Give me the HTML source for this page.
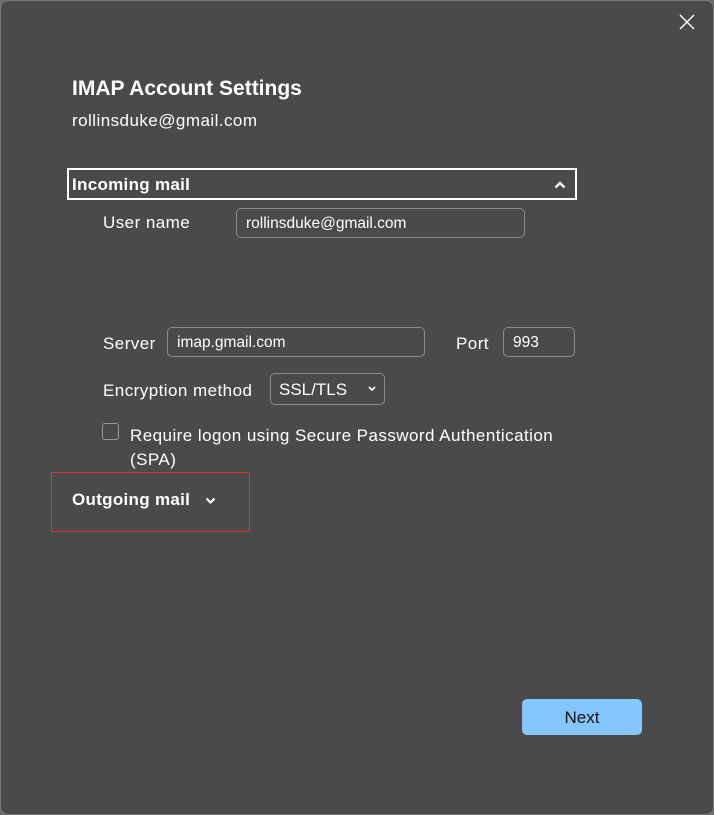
<!DOCTYPE html>
<html><head><meta charset="utf-8"><style>
html,body{margin:0;padding:0;background:#6a6a6a;}
body{width:714px;height:815px;position:relative;overflow:hidden;font-family:"Liberation Sans",sans-serif;color:#fff;}
.win{position:absolute;left:0;top:0;width:714px;height:815px;background:#4a4a4a;border-radius:8px;}
.frame{position:absolute;left:0;top:0;width:714px;height:815px;box-sizing:border-box;border:1px solid #7a7a7a;border-radius:8px;}
.abs{position:absolute;white-space:nowrap;}
.t{font-size:17px;letter-spacing:0.45px;}
.inp{position:absolute;border:1px solid #8a8a8a;border-radius:5px;box-sizing:border-box;font-size:15.5px;color:#fff;padding-left:9px;line-height:29px;}
.r{position:absolute;background:#e03535;}
</style></head><body>
<div class="win">
<div class="frame"></div>
<svg class="abs" style="left:679px;top:14px" width="16" height="16"><path d="M1 1L15 15M15 1L1 15" stroke="#fff" stroke-width="1.4"/></svg>
<div class="abs" style="left:72px;top:77px;font-size:21px;font-weight:bold">IMAP Account Settings</div>
<div class="abs t" style="left:72px;top:111px">rollinsduke@gmail.com</div>
<div class="abs" style="left:67px;top:168px;width:510px;height:32px;box-sizing:border-box;border:2px solid #fff;"></div>
<div class="abs t" style="left:72px;top:175px;font-weight:bold;letter-spacing:0.3px">Incoming mail</div>
<svg class="abs" style="left:554px;top:181px" width="12" height="8"><path d="M1.5 6.5L6 2L10.5 6.5" stroke="#fff" stroke-width="2.4" fill="none"/></svg>
<div class="abs t" style="left:103px;top:213px">User name</div>
<div class="inp" style="left:236px;top:208px;width:289px;height:30px">rollinsduke@gmail.com</div>
<div class="abs t" style="left:103px;top:334px">Server</div>
<div class="inp" style="left:167px;top:327px;width:258px;height:30px">imap.gmail.com</div>
<div class="abs t" style="left:456px;top:334px">Port</div>
<div class="inp" style="left:503px;top:327px;width:72px;height:30px">993</div>
<div class="abs t" style="left:103px;top:381px">Encryption method</div>
<div class="inp" style="left:270px;top:373px;width:115px;height:32px;font-size:17px;line-height:31px;padding-left:8px">SSL/TLS</div>
<svg class="abs" style="left:368px;top:386px" width="8" height="6"><path d="M1 1L4 4L7 1" stroke="#fff" stroke-width="1.6" fill="none"/></svg>
<div class="abs" style="left:102px;top:423px;width:17px;height:17px;border:1px solid #999;border-radius:3px;box-sizing:border-box"></div>
<div class="abs t" style="left:130px;top:424px;line-height:24px">Require logon using Secure Password Authentication<br>(SPA)</div>
<div class="r" style="left:51px;top:472px;width:199px;height:1px"></div>
<div class="r" style="left:51px;top:531px;width:199px;height:1px"></div>
<div class="r" style="left:51px;top:472px;width:1px;height:60px"></div>
<div class="r" style="left:249px;top:472px;width:1px;height:60px"></div>
<div class="abs t" style="left:72px;top:490px;font-weight:bold;letter-spacing:0.3px">Outgoing mail</div>
<svg class="abs" style="left:205px;top:497px" width="11" height="8"><path d="M1.5 1.5L5.5 5.5L9.5 1.5" stroke="#fff" stroke-width="2.2" fill="none"/></svg>
<div class="abs" style="left:522px;top:699px;width:120px;height:36px;background:#86c6ff;border-radius:5px;color:#111;font-size:17px;text-align:center;line-height:37px">Next</div>
</div>
</body></html>
